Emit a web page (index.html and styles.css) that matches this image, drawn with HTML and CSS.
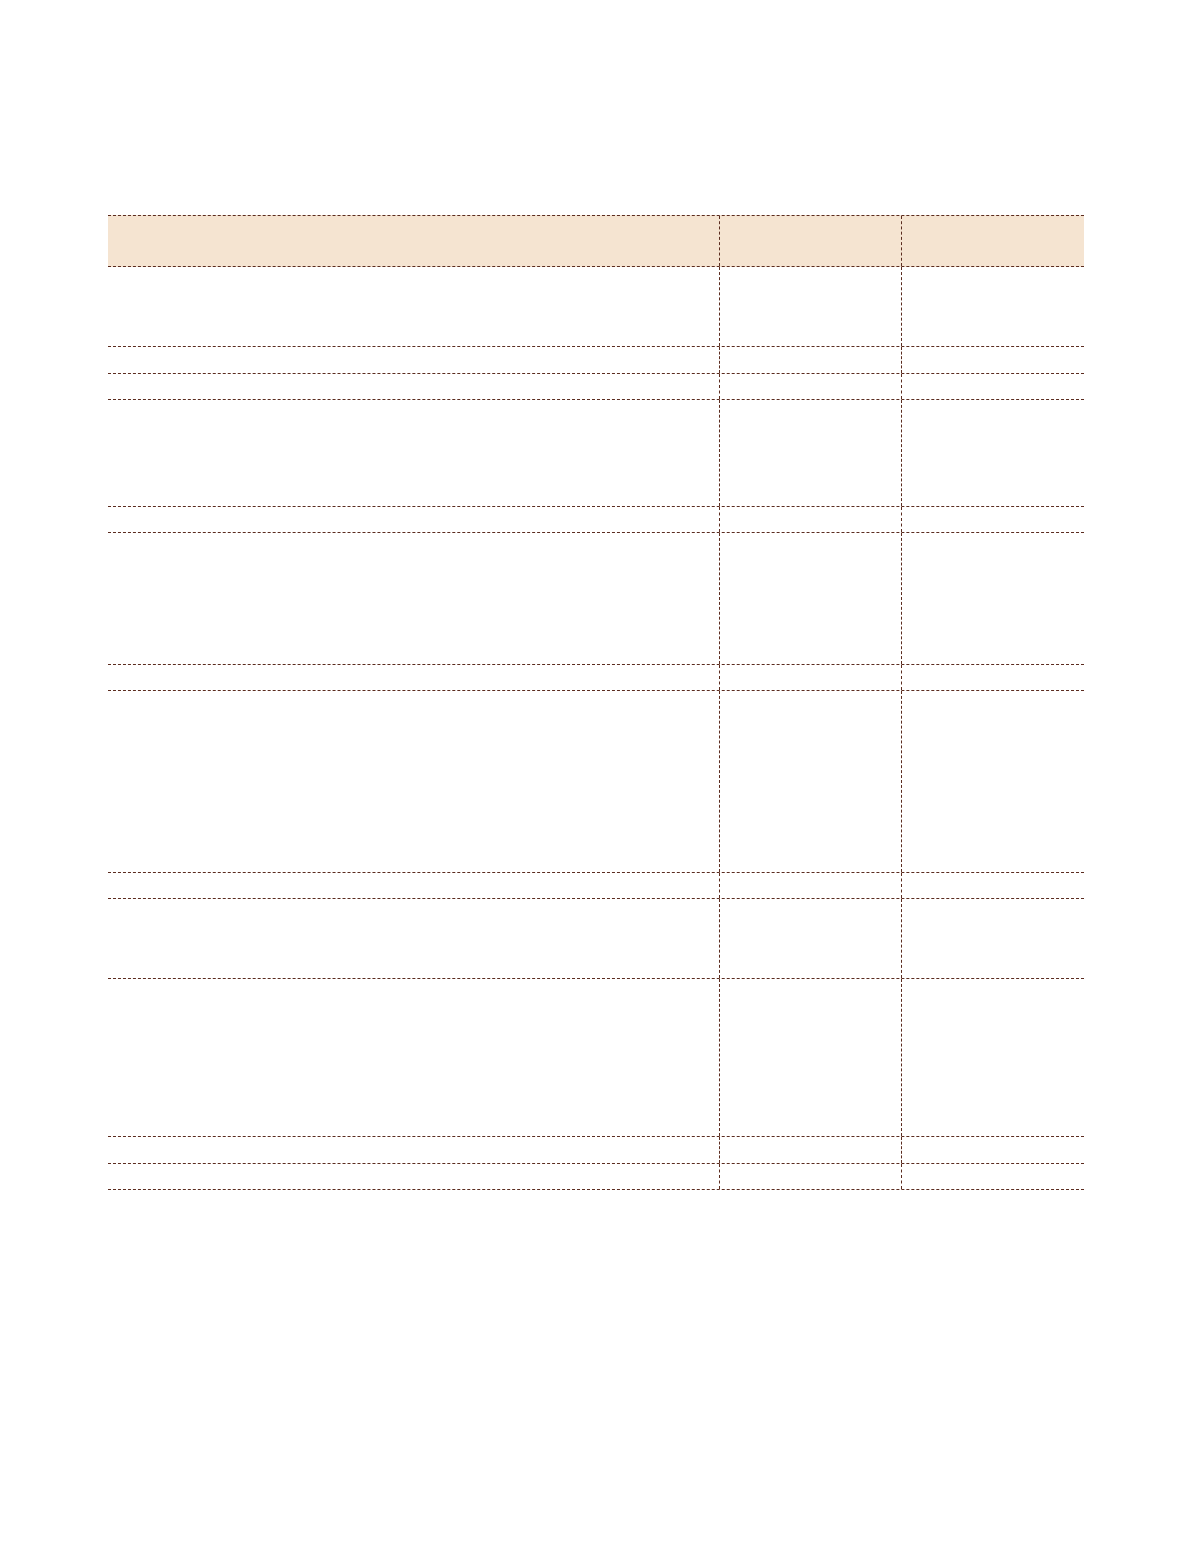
FILE: index.html
```html
<!DOCTYPE html>
<html lang="en">
<head>
<meta charset="utf-8">
<title>Table</title>
<link rel="stylesheet" href="styles.css">
</head>
<body>
<div class="page">
  <div class="table">
    <div class="row head h52"><div class="cell"></div><div class="cell"></div><div class="cell"></div></div>
    <div class="row h80"><div class="cell"></div><div class="cell"></div><div class="cell"></div></div>
    <div class="row h27"><div class="cell"></div><div class="cell"></div><div class="cell"></div></div>
    <div class="row h26"><div class="cell"></div><div class="cell"></div><div class="cell"></div></div>
    <div class="row h107"><div class="cell"></div><div class="cell"></div><div class="cell"></div></div>
    <div class="row h26"><div class="cell"></div><div class="cell"></div><div class="cell"></div></div>
    <div class="row h132"><div class="cell"></div><div class="cell"></div><div class="cell"></div></div>
    <div class="row h26"><div class="cell"></div><div class="cell"></div><div class="cell"></div></div>
    <div class="row h182"><div class="cell"></div><div class="cell"></div><div class="cell"></div></div>
    <div class="row h26"><div class="cell"></div><div class="cell"></div><div class="cell"></div></div>
    <div class="row h80"><div class="cell"></div><div class="cell"></div><div class="cell"></div></div>
    <div class="row h158"><div class="cell"></div><div class="cell"></div><div class="cell"></div></div>
    <div class="row h27"><div class="cell"></div><div class="cell"></div><div class="cell"></div></div>
    <div class="row h26"><div class="cell"></div><div class="cell"></div><div class="cell"></div></div>
  </div>
</div>
</body>
</html>
```

FILE: styles.css
```css
html, body {
  margin: 0;
  padding: 0;
  background: #ffffff;
  font-family: "Liberation Sans", Arial, sans-serif;
}
.page {
  padding: 215px 110px 0 108px;
  height: 1557px;
  box-sizing: border-box;
}
.table {
  width: 976px;
}
.row {
  display: grid;
  grid-template-columns: 611px 182px 183px;
  border-bottom: 1px dashed #5b2c1f;
  box-sizing: border-box;
}
.row.head {
  background: #f5e4d1;
  border-top: 1px dashed #5b2c1f;
}
.cell + .cell {
  border-left: 1px dashed #5b2c1f;
}
.h26 { height: 26px; }
.h27 { height: 27px; }
.h52 { height: 52px; }
.h80 { height: 80px; }
.h107 { height: 107px; }
.h132 { height: 132px; }
.h158 { height: 158px; }
.h182 { height: 182px; }
```
